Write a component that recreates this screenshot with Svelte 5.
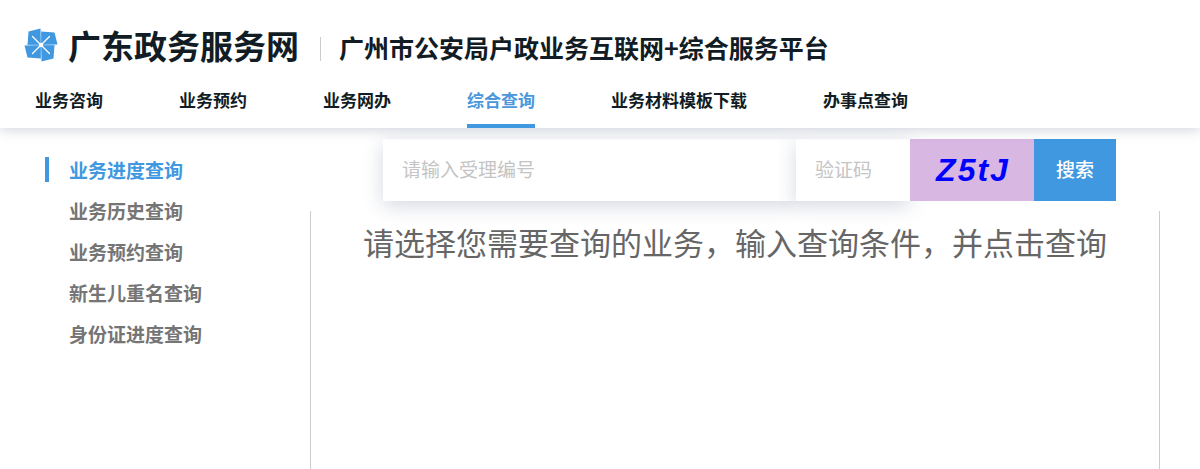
<script lang="ts">
  const navItems = ['业务咨询', '业务预约', '业务网办', '综合查询', '业务材料模板下载', '办事点查询'];
  const queryTypes = ['业务进度查询', '业务历史查询', '业务预约查询', '新生儿重名查询', '身份证进度查询'];
  const captcha = 'Z5tJ';

  let activeNav = $state('综合查询');
  let activeQuery = $state('业务进度查询');
  let acceptNo = $state('');
  let code = $state('');
</script>

<div class="page">
  <header class="header">
    <div class="brand">
      <svg class="logo" width="34" height="34" viewBox="-17 -17 34 34" aria-hidden="true">
        {#each [0, 90, 180, 270] as angle}
          <g transform="rotate({angle})">
            <path d="M0 0H-13.5L-12.5 -13.5L-0.5 -16.5Z" fill="#4098e0" />
          </g>
        {/each}
        {#each [0, 90, 180, 270] as angle}
          <g transform="rotate({angle})">
            <path d="M0 0V-15" stroke="#a9d2f2" stroke-width="0.6" />
            <path d="M0 0L-8.5 -8.5" stroke="#fff" stroke-width="1.3" stroke-linecap="round" />
          </g>
        {/each}
        <circle r="2.2" fill="#fff" />
      </svg>
      <h1 class="title">广东政务服务网</h1>
      <span class="divider"></span>
      <h2 class="subtitle">广州市公安局户政业务互联网+综合服务平台</h2>
    </div>
    <nav class="nav">
      {#each navItems as item}
        <a href="#nav" class:active={item === activeNav} onclick={() => (activeNav = item)}>{item}</a>
      {/each}
    </nav>
  </header>

  <div class="body">
    <aside class="sidebar">
      {#each queryTypes as item}
        <a href="#query" class:active={item === activeQuery} onclick={() => (activeQuery = item)}>{item}</a>
      {/each}
    </aside>

    <main class="main">
      <form class="search" onsubmit={(e) => e.preventDefault()}>
        <input class="number" type="text" placeholder="请输入受理编号" aria-label="受理编号" bind:value={acceptNo} />
        <input class="code" type="text" placeholder="验证码" aria-label="验证码" bind:value={code} />
        <button class="captcha" type="button">
          {#each captcha as char}<span>{char}</span>{/each}
        </button>
        <button class="submit" type="submit">搜索</button>
      </form>
      <section class="result">
        <p>请选择您需要查询的业务，输入查询条件，并点击查询</p>
      </section>
    </main>
  </div>
</div>

<style>
  :global(body) {
    margin: 0;
    background: #fff;
  }
  .page {
    display: flex;
    flex-direction: column;
    min-height: 100vh;
    font-family: 'Noto Sans CJK SC', sans-serif;
    color: #111c24;
  }
  .header {
    position: relative;
    z-index: 1;
    padding-top: 23px;
    background: #fff;
    box-shadow: 0 2px 12px rgba(40, 60, 100, 0.22);
  }
  .brand {
    display: flex;
    align-items: center;
    height: 44px;
    padding-left: 24px;
  }
  .logo {
    flex: none;
  }
  .title,
  .subtitle {
    margin: 0;
    font-weight: 700;
    white-space: nowrap;
  }
  .title {
    margin-left: 10px;
    font-size: 33px;
    line-height: 44px;
  }
  .divider {
    width: 1px;
    height: 24px;
    margin: 8px 18px 0 21px;
    background: #ccc;
  }
  .subtitle {
    padding-top: 4px;
    font-size: 25px;
    line-height: 40px;
  }
  .nav {
    display: flex;
    gap: 76px;
    padding: 7px 35px 0;
  }
  .nav a {
    padding: 12px 0 10px;
    border-bottom: 4px solid transparent;
    font-size: 17px;
    font-weight: 700;
    line-height: 28px;
    color: inherit;
    text-decoration: none;
    white-space: nowrap;
  }
  .nav a.active {
    color: #4c97dc;
    border-color: #4098e0;
  }
  .body {
    display: flex;
    flex: 1;
  }
  .sidebar {
    display: flex;
    flex: none;
    flex-direction: column;
    gap: 16px;
    box-sizing: border-box;
    width: 310px;
    padding: 29px 0 29px 45px;
  }
  .sidebar a {
    padding-left: 20px;
    border-left: 4px solid transparent;
    font-size: 19px;
    font-weight: 700;
    line-height: 25px;
    color: #757575;
    text-decoration: none;
  }
  .sidebar a.active {
    color: #4098e0;
    border-color: #4098e0;
  }
  .main {
    display: flex;
    flex: 1;
    flex-direction: column;
    gap: 10px;
    min-width: 0;
    padding: 11px 40px 0 0;
  }
  .search {
    display: flex;
    height: 62px;
    margin: 0 44px 0 73px;
  }
  .search input,
  .search button {
    box-sizing: border-box;
    border: 0;
    border-radius: 0;
    font: inherit;
    font-size: 19px;
  }
  .search input {
    min-width: 0;
    padding: 0 19px 4px;
    background: #fff;
    color: #333;
    box-shadow: 0 5px 20px rgba(40, 60, 100, 0.2);
    outline: none;
  }
  .search input::placeholder {
    color: #c4c4c4;
    opacity: 1;
  }
  .number {
    flex: 1;
  }
  .code {
    width: 114px;
  }
  .search .captcha {
    display: flex;
    align-items: center;
    justify-content: center;
    gap: 2px;
    width: 124px;
    padding: 0;
    background: #d8b7e2;
    color: #00f;
    font-family: 'Liberation Sans', Arial, sans-serif;
    font-size: 32px;
    font-style: italic;
    font-weight: 700;
    cursor: pointer;
  }
  .search .submit {
    width: 82px;
    padding: 0 0 4px;
    background: #4098e0;
    color: #fff;
    font-weight: 500;
    cursor: pointer;
  }
  .result {
    flex: 1;
    border: 1px solid #ccc;
    border-width: 0 1px;
  }
  .result p {
    margin: 0;
    padding: 8px 0;
    font-size: 31px;
    font-weight: 400;
    line-height: 46px;
    color: #666;
    text-align: center;
  }
</style>
